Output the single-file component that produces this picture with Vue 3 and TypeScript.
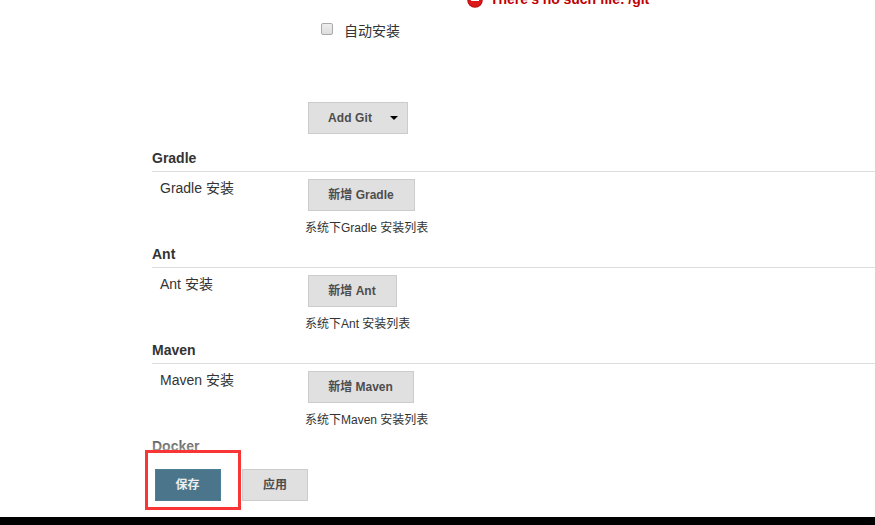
<script setup lang="ts">
interface Tool {
  name: string
  width: number
}

const tools: Tool[] = [
  { name: 'Gradle', width: 107 },
  { name: 'Ant', width: 89 },
  { name: 'Maven', width: 106 },
]
</script>

<template>
  <main class="page">
    <section class="git">
      <div class="error">
        <svg class="error-icon" width="16" height="16" viewBox="0 0 16 16">
          <circle cx="8" cy="8" r="7.8" fill="#b80f12" />
          <circle cx="8" cy="8" r="6.7" fill="#dc1818" />
          <rect x="4" y="6" width="8" height="3" rx="0.5" fill="#fff" />
        </svg>
        <span>There's no such file: /git</span>
      </div>
      <label class="auto">
        <input class="check" type="checkbox" />
        <span>自动安装</span>
      </label>
      <button class="btn add-git" type="button">
        <span>Add Git</span>
        <svg width="8" height="4" viewBox="0 0 8 4"><path d="M0 0h8L4 4z" fill="#000" /></svg>
      </button>
    </section>

    <section v-for="tool in tools" :key="tool.name" class="tool">
      <h2 class="heading">{{ tool.name }}</h2>
      <div class="row">
        <div class="label">{{ tool.name }} 安装</div>
        <div class="setting">
          <button class="btn" type="button" :style="{ width: tool.width + 'px' }">新增 {{ tool.name }}</button>
          <p class="help">系统下{{ tool.name }} 安装列表</p>
        </div>
      </div>
    </section>

    <h2 class="heading docker">Docker</h2>

    <footer class="actions">
      <div class="highlight">
        <button class="btn primary" type="button">保存</button>
      </div>
      <button class="btn apply" type="button">应用</button>
    </footer>
    <div class="strip"></div>
  </main>
</template>

<style>
body {
  margin: 0;
  background: #fff;
}
</style>

<style scoped>
.page {
  position: relative;
  box-sizing: border-box;
  width: 100%;
  height: 525px;
  padding-left: 152px;
  overflow: hidden;
  color: #333;
  font: 14px/20px "Liberation Sans", "Noto Sans CJK SC", sans-serif;
}
.git {
  display: flow-root;
  box-sizing: border-box;
  height: 146px;
  padding-left: 156px;
}
.error {
  display: flex;
  gap: 7px;
  height: 20px;
  margin: -11px 0 0 159px;
  align-items: center;
  color: #c00000;
  font-weight: bold;
  letter-spacing: -0.05px;
}
.error-icon {
  margin-top: 2px;
}
.auto {
  display: flex;
  height: 20px;
  margin: 12px 0 0 13px;
  gap: 11px;
}
.check {
  appearance: none;
  box-sizing: border-box;
  width: 12px;
  height: 12px;
  margin: 2px 0 0;
  border: 1px solid #aaa;
  border-radius: 2px;
  background: linear-gradient(#eee, #ddd);
}
.btn {
  display: block;
  box-sizing: border-box;
  height: 32px;
  margin: 0;
  padding: 0 1px 0 0;
  border: 1px solid #ccc;
  border-radius: 0;
  background: #e0e0e0;
  color: #4d4d4d;
  font: bold 12px/30px "Liberation Sans", "Noto Sans CJK SC", sans-serif;
  text-align: center;
  white-space: nowrap;
}
.add-git {
  display: flex;
  width: 100px;
  margin-top: 61px;
  padding: 0 9px 0 19px;
  align-items: center;
  justify-content: space-between;
  letter-spacing: 0.1px;
}
.tool {
  height: 96px;
}
.heading {
  box-sizing: border-box;
  height: 26px;
  margin: 0;
  padding-top: 2px;
  border-bottom: 1px solid #ddd;
  color: #333;
  font-size: 14px;
  line-height: 20px;
}
.row {
  display: flex;
}
.label {
  box-sizing: border-box;
  width: 156px;
  padding: 6px 0 0 8px;
}
.setting {
  padding-top: 7px;
}
.help {
  margin: 8px 0 0 -3px;
  font-size: 12px;
  line-height: 18px;
  white-space: nowrap;
}
.docker {
  border-bottom-color: transparent;
}
.actions {
  position: absolute;
  left: 145px;
  right: 0;
  top: 430px;
  display: flex;
  box-sizing: border-box;
  height: 87px;
  padding-top: 20px;
  gap: 1px;
  background: linear-gradient(rgba(255, 255, 255, 0), rgba(255, 255, 255, 0.45) 20px, #fff 22px);
}
.highlight {
  box-sizing: border-box;
  width: 96px;
  height: 60px;
  padding: 16px 0 0 7px;
  border: 3px solid #fa3535;
}
.primary {
  width: 66px;
  border-color: #4d8097;
  background: #4b758b;
  color: #eee;
}
.apply {
  width: 66px;
  padding-right: 0;
  margin-top: 19px;
}
.strip {
  position: absolute;
  left: 0;
  right: 0;
  bottom: 0;
  height: 8px;
  background: #000;
}
</style>
